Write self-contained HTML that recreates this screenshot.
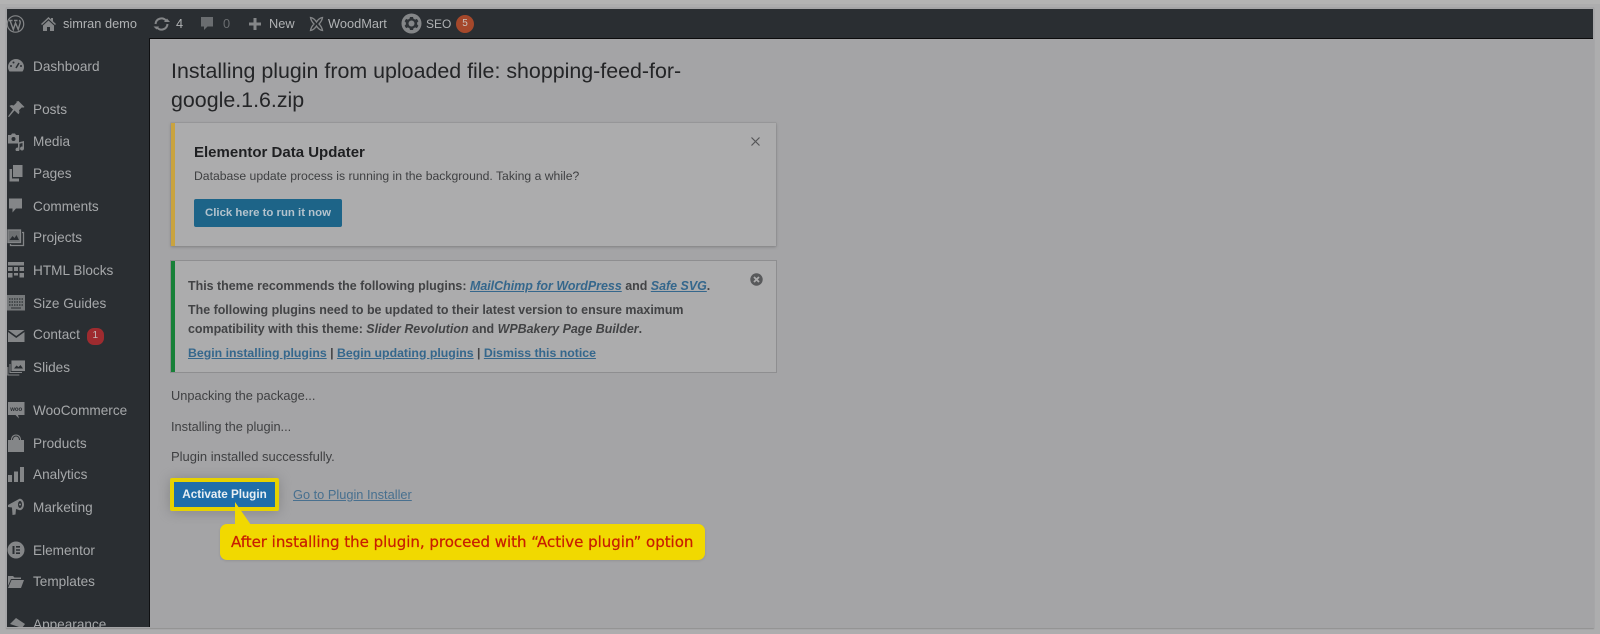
<!DOCTYPE html>
<html><head><meta charset="utf-8">
<style>
html,body{margin:0;padding:0;width:1600px;height:634px;overflow:hidden;background:#adadae}
body{font-family:"Liberation Sans",sans-serif;position:relative}
#w{position:absolute;left:0;top:0;width:1600px;height:634px;overflow:hidden;filter:blur(.35px)}
#w div,#w a,#w svg{position:absolute}
.t{white-space:nowrap;line-height:20px;height:20px}
.b{color:#b0b2b4;font-size:12.8px}
.m{color:#a6a8aa;font-size:13.6px;left:33px;margin-top:1px}
.i{fill:#848688}
.c{color:#3f4042;font-size:13px}
.d{font-size:12.45px;font-weight:bold;color:#424345}
a{color:#35678c;text-decoration:underline}
#w .n a,#w .n b,#w .n i{position:static}
</style></head><body><div id="w">
<div style="left:0;top:0;width:1600px;height:4px;background:#b3b3b3"></div>
<div style="left:6px;top:7px;width:1588px;height:621px;background:#a4a4a6;box-shadow:0 1px 1px #8e8e8e"></div>
<div style="left:6.5px;top:8.5px;width:1586.5px;height:30px;background:#2a2e32"></div>
<div style="left:149px;top:38px;width:1444px;height:1px;background:#0b0b0c"></div>
<div style="left:6.5px;top:38px;width:142.8px;height:589px;background:#2a2e32;overflow:hidden"></div>
<div style="left:149px;top:38px;width:1px;height:589px;background:#0f1012"></div>

<svg style="left:6px;top:15px" width="19" height="18" viewBox="0 0 19 18"><circle cx="9.5" cy="9" r="8.2" fill="none" stroke="#848688" stroke-width="1.2"/><path d="M4 5.500l3.300 9L9.500 8l2.700 6.500 2-6.500c.3-1.500-.3-2.300-.8-3M3 5.500h3.500M8 5.500h3.500" fill="none" stroke="#848688" stroke-width="1.400"/></svg>
<svg style="left:41px;top:16px" width="15" height="16" viewBox="0 0 15 16"><path class="i" d="M7.500 1L0 8l1 1 6.500-6 6.500 6 1-1-3-2.800V2h-2v1.400zM2 9.500V15h4v-4h3v4h4V9.500L7.500 4.500z"/></svg>
<div class="t b" style="left:63px;top:14px">simran demo</div>
<svg style="left:153px;top:16px" width="17" height="16" viewBox="0 0 17 16"><path d="M2.500 8a6 6 0 0 1 10.500-3.500M14.500 8a6 6 0 0 1-10.500 3.500" fill="none" stroke="#848688" stroke-width="2"/><path class="i" d="M11 6h6l-3-3.500zM6 10.500H0.500l3 3z"/></svg>
<div class="t b" style="left:176px;top:14px">4</div>
<svg style="left:200px;top:16px" width="14" height="16" viewBox="0 0 14 16"><path fill="#6a6d70" d="M1 1h12v9.500H7.500L4 14v-3.500H1z"/></svg>
<div class="t b" style="left:223px;top:14px;color:#6a6d70">0</div>
<svg style="left:248px;top:17px" width="14" height="14" viewBox="0 0 14 14"><path class="i" d="M5.500 1h3v4.500H13v3H8.500V13h-3V8.500H1v-3h4.500z"/></svg>
<div class="t b" style="left:269px;top:14px">New</div>
<svg style="left:309px;top:16px" width="15" height="16" viewBox="0 0 15 16" fill="none" stroke="#848688" stroke-width="1.300"><path d="M1.500 1.500c3 .5 4.500 2 6 4.500 1.500-2.500 3-4 6-4.500-.5 3-1.500 4.500-3.500 6.500 2 2 3 3.500 3.500 6.500-3-.5-4.500-2-6-4.500-1.500 2.500-3 4-6 4.500.5-3 1.500-4.500 3.500-6.500-2-2-3-3.500-3.500-6.500z"/></svg>
<div class="t b" style="left:328px;top:14px">WoodMart</div>
<svg style="left:401px;top:13px" width="21" height="21" viewBox="0 0 21 21"><circle cx="10.500" cy="10.500" r="10" fill="#848688"/><path fill="#2e3236" d="M9 4h3l.5 1.800 1.700.8 1.700-.7 1.500 2.400-1.300 1.300v1.800l1.300 1.300-1.500 2.400-1.700-.7-1.700.8L12 17H9l-.5-1.800-1.700-.8-1.700.7-1.500-2.400 1.300-1.300V9.600L3.600 8.300l1.500-2.400 1.700.7 1.700-.8z"/><circle cx="10.500" cy="10.500" r="3" fill="#848688"/></svg>
<div class="t b" style="left:426px;top:14px;font-size:12px">SEO</div>
<div style="left:456px;top:15px;width:18px;height:18px;border-radius:50%;background:#a5482b"></div>
<div class="t" style="left:456px;top:14px;width:18px;text-align:center;font-size:10px;color:#c9c3bd">5</div>

<svg style="left:8px;top:57px" width="16" height="17" viewBox="0 0 16 17"><path class="i" d="M8 2a8 8 0 0 0-8 8c0 1.800.6 3.300 1.500 4.500h13C15.400 13.300 16 11.800 16 10a8 8 0 0 0-8-8z"/><path d="M8 11l3-5" stroke="#2a2e32" stroke-width="1.500"/><circle cx="3" cy="9" r="1" fill="#2a2e32"/><circle cx="13" cy="9" r="1" fill="#2a2e32"/><circle cx="5.500" cy="5.500" r="1" fill="#2a2e32"/></svg>
<div class="t m" style="top:56px">Dashboard</div>
<svg style="left:8px;top:101px" width="17" height="17" viewBox="0 0 17 17"><path class="i" d="M10.500 0l6 6-1.500.8-1-.6-3 3c.7 1.500.5 3-.5 4L6.500 9.500 1 16l-1-.5L5 8.500 1.500 5c1-1 2.800-1.200 4.200-.5l3-3-.4-.9z"/></svg>
<div class="t m" style="top:99px">Posts</div>
<svg style="left:7px;top:133px" width="18" height="18" viewBox="0 0 18 18"><path class="i" d="M1 2h3l1-1.500h3L9 2h3v8.500H1z"/><circle cx="6.500" cy="6" r="2" fill="#2a2e32"/><path class="i" d="M17 8v7.500a2 2 0 1 1-1.500-1.900V10l-3 .8v5.700a2 2 0 1 1-1.500-1.900V9.500z"/></svg>
<div class="t m" style="top:131px">Media</div>
<svg style="left:9px;top:165px" width="14" height="17" viewBox="0 0 14 17"><path class="i" d="M4 0h9.500v12H4z"/><path class="i" d="M.5 4H3v9.500h7V16.500H.5z"/></svg>
<div class="t m" style="top:163px">Pages</div>
<svg style="left:9px;top:198px" width="14" height="16" viewBox="0 0 14 16"><path class="i" d="M0 .5h13v10H7L3.500 14.500V10.500H0z"/></svg>
<div class="t m" style="top:196px">Comments</div>
<svg style="left:7px;top:229px" width="18" height="18" viewBox="0 0 18 18" fill="none" stroke="#848688" stroke-width="1.300"><rect x="1" y="1" width="12.500" height="12.500" fill="#6d7072"/><path d="M3.500 15v1.500h13v-13H15"/><path d="M2.500 11l3-4 2 2 2-3 2.500 5z" fill="#2a2e32" stroke="none"/></svg>
<div class="t m" style="top:227px">Projects</div>
<svg style="left:8px;top:262px" width="16" height="16" viewBox="0 0 16 16"><path class="i" d="M0 0h16v3.500H0zM0 5h4.500v4H0zM6 5h4v4H6zM11.500 5H16v4h-4.500zM0 11h4.500v4.500H0zM6 11h4v2.500H6zM11.500 11H16v4.500h-4.500z"/></svg>
<div class="t m" style="top:260px">HTML Blocks</div>
<svg style="left:7px;top:295px" width="18" height="16" viewBox="0 0 18 16"><rect width="18" height="15.500" fill="#75787a"/><path d="M2 4h14M2 7h14M2 10h14" stroke="#2a2e32" stroke-width="1.200" stroke-dasharray="1.500 1"/><path d="M4 13h10" stroke="#2a2e32"/></svg>
<div class="t m" style="top:293px">Size Guides</div>
<svg style="left:8px;top:330px" width="17" height="12" viewBox="0 0 17 12"><path class="i" d="M0 0h16.500L8.250 6zM0 2l8.250 6 8.250-6v10H0z"/></svg>
<div class="t m" style="top:324px">Contact</div>
<div style="left:87px;top:328px;width:16.500px;height:16.500px;border-radius:7px;background:#9e2b2f"></div>
<div class="t" style="left:87px;top:326px;width:16.500px;text-align:center;font-size:10px;color:#c3bcbc">1</div>
<svg style="left:7px;top:360px" width="18" height="16" viewBox="0 0 18 16" fill="none" stroke="#848688" stroke-width="1.100"><rect x="5" y="1" width="12.500" height="9.500" fill="#848688"/><path d="M3 4v8.500h12M.8 7v8h11.500"/><path d="M7 8.500l2.500-3 2 1.500 2-2 2.500 3.500z" fill="#2a2e32" stroke="none"/></svg>
<div class="t m" style="top:357px">Slides</div>
<svg style="left:7px;top:402px" width="18" height="18" viewBox="0 0 18 18"><path class="i" d="M1 0h16.500v13H11l1 3.500-3.500-3.500H1z"/><text x="9.200" y="9" text-anchor="middle" font-size="6" font-weight="bold" font-family="Liberation Sans" fill="#2a2e32">woo</text></svg>
<div class="t m" style="top:400px">WooCommerce</div>
<svg style="left:8px;top:434px" width="16" height="18" viewBox="0 0 16 18"><path class="i" d="M0 6h3C3 3 4.500 .5 8 .5S13 3 13 6h3v12H0z"/><path d="M4.500 6c0-2 1.200-4 3.500-4s3.500 2 3.500 4" fill="none" stroke="#2a2e32" stroke-width="1"/></svg>
<div class="t m" style="top:433px">Products</div>
<svg style="left:8px;top:467px" width="16" height="15" viewBox="0 0 16 15"><path class="i" d="M0 8h4v7H0zM6 4.500h4V15H6zM12 0h4v15h-4z"/></svg>
<div class="t m" style="top:464px">Analytics</div>
<svg style="left:8px;top:498px" width="17" height="18" viewBox="0 0 17 18"><path class="i" d="M0 7l11-6c2.500-1 5 2 5 5.500S13.500 13 11 12L8 11l-.5 5.500-3 .5-.5-7.500L0 9z"/><ellipse cx="12" cy="6.500" rx="2" ry="3.500" fill="#2a2e32"/><circle cx="12" cy="6.500" r="1" fill="#848688"/></svg>
<div class="t m" style="top:497px">Marketing</div>
<svg style="left:7px;top:541px" width="18" height="18" viewBox="0 0 18 18"><circle cx="9" cy="9" r="8.500" fill="#848688"/><path d="M5.500 5h2v8h-2zM9 5h4v1.600H9zM9 8.200h4v1.600H9zM9 11.400h4V13H9z" fill="#2a2e32"/></svg>
<div class="t m" style="top:540px">Elementor</div>
<svg style="left:8px;top:575px" width="16" height="13" viewBox="0 0 16 13"><path class="i" d="M0 1h5l1.500 1.500H13V4H3L0 11zM3.500 5H16l-3 8H0z"/></svg>
<div class="t m" style="top:571px">Templates</div>
<div style="left:6.500px;top:600px;width:142.500px;height:27px;overflow:hidden">
<svg style="left:3px;top:18px" width="16" height="14" viewBox="0 0 16 14"><path class="i" d="M0 6l6-6 9 6-3 4z"/></svg>
<div class="t m" style="left:26.500px;top:14px">Appearance</div>
</div>

<div class="t" style="left:171px;top:57px;font-size:21.400px;height:28px;line-height:28px;color:#242527">Installing plugin from uploaded file: shopping-feed-for-</div>
<div class="t" style="left:171px;top:86px;font-size:21.400px;height:28px;line-height:28px;color:#242527">google.1.6.zip</div>

<div style="left:171px;top:123px;width:605px;height:123px;background:#acacad;box-shadow:0 1px 3px #818183,0 0 0 .5px #939394"></div>
<div style="left:171px;top:123px;width:4px;height:123px;background:#c9a33f"></div>
<div class="t" style="left:194px;top:142.500px;font-size:15px;font-weight:bold;color:#1f2022">Elementor Data Updater</div>
<div class="t" style="left:194px;top:166px;font-size:12.200px;color:#3f4042">Database update process is running in the background. Taking a while?</div>
<div style="left:194px;top:199px;width:148px;height:28px;border-radius:2px;background:#1d6488"></div>
<div class="t" style="left:194px;top:203px;width:148px;text-align:center;font-size:11.400px;font-weight:bold;color:#b4c3cd">Click here to run it now</div>
<svg style="left:751px;top:137px" width="9" height="9" viewBox="0 0 9 9"><path d="M.5.500l8 8M8.500.500l-8 8" stroke="#555658" stroke-width="1.200"/></svg>

<div style="left:171px;top:261px;width:605px;height:111px;background:#acacad;box-shadow:0 0 0 1px #8e8e90"></div>
<div style="left:171px;top:261px;width:4px;height:111px;background:#178038"></div>
<div class="t d n" style="left:188px;top:275.500px">This theme recommends the following plugins: <a href="#"><i>MailChimp for WordPress</i></a> and <a href="#"><i>Safe SVG</i></a>.</div>
<div class="t d n" style="left:188px;top:299.500px">The following plugins need to be updated to their latest version to ensure maximum</div>
<div class="t d n" style="left:188px;top:318.500px">compatibility with this theme: <i>Slider Revolution</i> and <i>WPBakery Page Builder</i>.</div>
<div class="t d n" style="left:188px;top:342.500px;font-size:12.300px"><a href="#">Begin installing plugins</a> | <a href="#">Begin updating plugins</a> | <a href="#">Dismiss this notice</a></div>
<svg style="left:750px;top:273px" width="13" height="13" viewBox="0 0 13 13"><circle cx="6.500" cy="6.500" r="6.200" fill="#58595b"/><path d="M4 4l5 5M9 4l-5 5" stroke="#acacad" stroke-width="1.800"/></svg>

<div class="t c" style="left:171px;top:385.500px;font-size:12.800px">Unpacking the package...</div>
<div class="t c" style="left:171px;top:416.500px;font-size:12.800px">Installing the plugin...</div>
<div class="t c" style="left:171px;top:447px">Plugin installed successfully.</div>

<div style="left:170px;top:478px;width:109px;height:33px;border-radius:2px;background:#e6d200;box-shadow:0 1px 12px #858587"></div>
<div style="left:174px;top:482px;width:101px;height:25px;background:#1f6eaa"></div>
<div class="t" style="left:174px;top:485px;width:101px;text-align:center;font-size:11.700px;font-weight:bold;color:#e8eef3">Activate Plugin</div>
<a class="t" href="#" style="left:293px;top:485px;font-size:12.800px;color:#48708f">Go to Plugin Installer</a>

<div style="left:220px;top:524px;width:485px;height:35.500px;border-radius:7px;background:#f1d900;box-shadow:0 1px 2px #939395"></div>
<svg style="left:232px;top:501px" width="22" height="26" viewBox="0 0 22 26"><path d="M3 1l16 23H3z" fill="#f1d900"/></svg>
<div class="t" style="left:231px;top:531.500px;font-size:15px;color:#c81e00;font-family:'DejaVu Sans',sans-serif;-webkit-text-stroke:.25px #c81e00;letter-spacing:-.02px">After installing the plugin, proceed with “Active plugin” option</div>
</div></body></html>
